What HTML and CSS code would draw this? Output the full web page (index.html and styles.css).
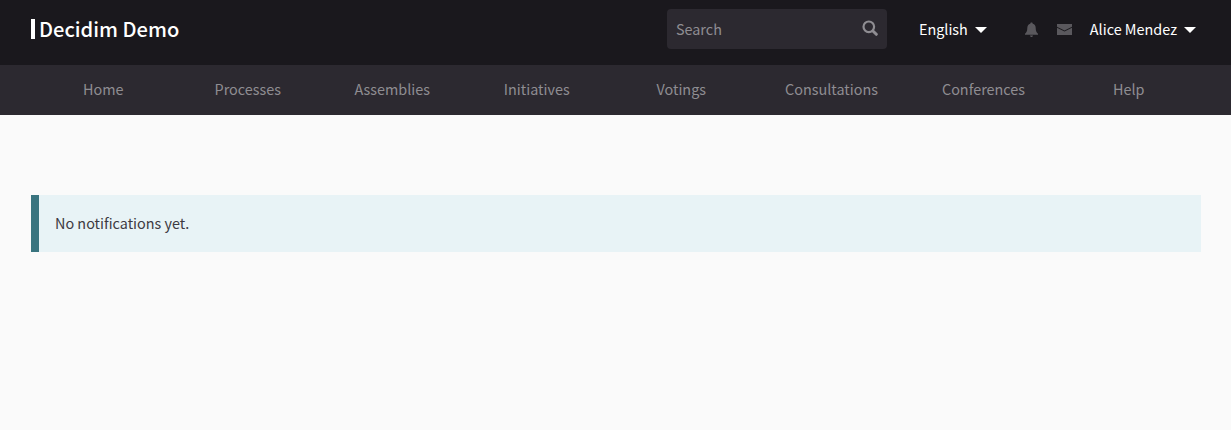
FILE: index.html
```html
<!DOCTYPE html>
<html lang="en">
<head>
<meta charset="utf-8">
<title>Decidim Demo</title>
<link rel="stylesheet" href="styles.css">
</head>
<body>
<header class="topbar">
  <a class="logo">Decidim Demo</a>
  <div class="search">
    <span class="search-text">Search</span>
    <svg class="search-icon" viewBox="0 0 16 16" width="16" height="16"><circle cx="6.800" cy="6.800" r="5.300" fill="none" stroke="#8f8d92" stroke-width="2.200"/><path d="M11.200 11.200L14.300 14.300" stroke="#8f8d92" stroke-width="3" stroke-linecap="round"/></svg>
  </div>
  <div class="lang"><span>English</span><i class="caret"></i></div>
  <svg class="bell" viewBox="0 0 14 15" width="15" height="15"><path d="M7 0.6c.8 0 1.2.5 1.2 1.1 2 .5 3 2.1 3 4.2 0 3 .8 4.6 2.3 5.900v.9H.5v-.9C2 10.500 2.800 8.900 2.800 5.900c0-2.100 1-3.700 3-4.200C5.800 1.100 6.200.6 7 .6zM5.500 13.500h3C8.500 14.300 7.800 15 7 15s-1.500-.7-1.500-1.500z" fill="#5a585d"/></svg>
  <svg class="mail" viewBox="0 0 15 11" width="15" height="11"><path d="M0 0h15v2.700L7.500 6.500 0 2.700zM0 3.700l7.500 3.800L15 3.700V11H0z" fill="#5a585d"/></svg>
  <div class="user"><span>Alice Mendez</span><i class="caret"></i></div>
</header>
<nav class="mainnav">
  <a>Home</a><a>Processes</a><a>Assemblies</a><a>Initiatives</a><a>Votings</a><a>Consultations</a><a>Conferences</a><a>Help</a>
</nav>
<main class="content">
  <div class="callout">No notifications yet.</div>
</main>
</body>
</html>
```
FILE: styles.css
```css
* { box-sizing: border-box; }
html, body { margin: 0; height: 100%; }
body {
  background: #fafafa;
  font-family: "Noto Sans CJK SC", "Noto Sans", sans-serif;
  font-size: 16px;
  color: #3d3a42;
}
.topbar {
  height: 65px;
  background: #1a181d;
  display: flex;
  align-items: center;
  padding: 0 35px 7px 31px;
  color: #fff;
}
.logo {
  font-size: 20.1px;
  font-weight: 500;
  line-height: 20px;
  border-left: 4px solid #fff;
  padding-left: 4px;
  margin-right: auto;
}
.search {
  width: 220px;
  height: 40px;
  background: #2c2930;
  border-radius: 4px;
  display: flex;
  align-items: center;
  justify-content: space-between;
  padding: 0 9px;
  margin-right: 32px;
  color: #8f8d92;
  font-size: 14.4px;
}
.search-text, .lang span, .user span { margin-top: -2px; }
.search-icon { margin-top: -3px; margin-right: 0; }
.lang, .user {
  display: flex;
  align-items: center;
  font-size: 14.4px;
}
.lang { margin-right: 37px; }
.caret {
  width: 0;
  height: 0;
  border: 6px solid transparent;
  border-top-color: #fff;
  border-bottom-width: 0;
  margin-left: 7px;
  margin-top: 2px;
}
.bell { margin-right: 18px; margin-top: 1px; }
.mail { margin-right: 18px; margin-top: 1px; }
.mainnav {
  height: 50px;
  background: #2c2930;
  padding: 0 31px 4px;
  display: grid;
  grid-template-columns: repeat(5, 144.5px) 156px 148px 1fr;
  align-items: center;
  text-align: center;
  color: #8f8d92;
  font-size: 14.4px;
}
.content { padding: 80px 30px 0 31px; }
.callout {
  height: 57px;
  background: #e8f3f6;
  border-left: 8px solid #39747f;
  padding: 0 0 2px 16px;
  display: flex;
  align-items: center;
  font-size: 14.4px;
}
```
